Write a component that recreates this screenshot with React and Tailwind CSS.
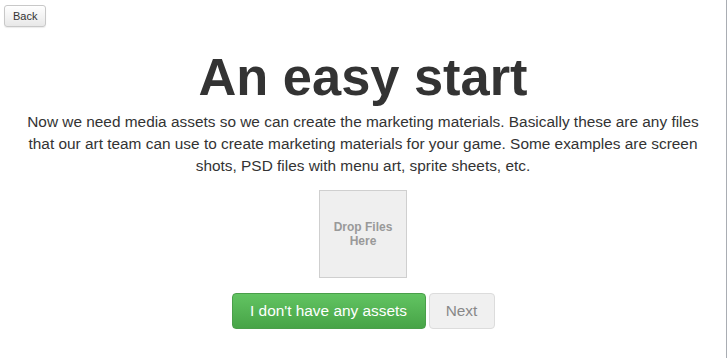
export default function App() {
  return (
    <div className="flex h-[358px] w-[728px] overflow-hidden bg-white" style={{ fontFamily: '"Liberation Sans", Arial, sans-serif' }}>
      <div className="flex w-[726px] flex-col">
        <div className="pl-[4px] pt-[3px]">
          <button className="h-[22px] rounded-[3px] border border-[#c8c8c8] bg-gradient-to-b from-white to-[#e8e8e8] px-[8px] text-[11px] leading-[20px] text-[#333] shadow-[0_1px_1px_rgba(0,0,0,0.08)]">
            Back
          </button>
        </div>
        <h1 className="mt-[24px] text-center text-[52.4px] font-bold leading-[52px] text-[#333]">An easy start</h1>
        <p className="mt-[8px] px-[22px] text-center text-[15.4px] leading-[22px] text-[#333]">
          Now we need media assets so we can create the marketing materials. Basically these are any files that our art team can use to create marketing materials for your game. Some examples are screen shots, PSD files with menu art, sprite sheets, etc.
        </p>
        <div className="mt-[13px] flex justify-center">
          <div className="flex h-[88px] w-[88px] items-center justify-center border border-[#cfcfcf] bg-[#efefef] text-center text-[12px] font-bold leading-[14px] text-[#999]">
            Drop Files<br />Here
          </div>
        </div>
        <div className="mt-[15px] flex justify-center gap-[3px]">
          <button className="h-[36px] w-[194px] rounded-[4px] border border-[#4a9f4a] bg-gradient-to-b from-[#62c462] to-[#47a447] text-[15.4px] text-white">
            I don't have any assets
          </button>
          <button className="h-[36px] w-[66px] rounded-[4px] border border-[#dcdcdc] bg-[#f0f0f0] text-[15.4px] text-[#888]">
            Next
          </button>
        </div>
      </div>
      <div className="h-full w-px bg-[#a9adb3]" />
      <div className="h-full w-px bg-white" />
    </div>
  );
}
